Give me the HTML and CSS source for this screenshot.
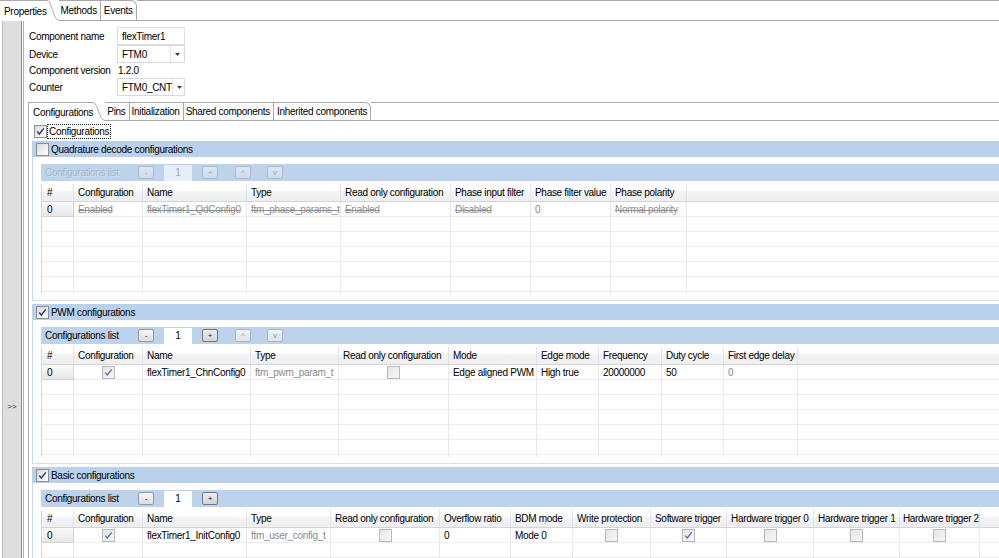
FILE: index.html
```html
<!DOCTYPE html>
<html>
<head>
<meta charset="utf-8">
<title>Properties</title>
<link rel="stylesheet" href="styles.css">
</head>
<body>
<div class="topbar">
  <div class="tab-active">
    <span class="lbl">Properties</span>
    <svg class="curve" viewBox="0 0 12 21"><path d="M0 0.5 C5 0.5 6 20.5 12 20.5" fill="none" stroke="#a9a9a9"/></svg>
  </div>
  <div class="tab">Methods</div>
  <div class="tab last">Events</div>
  <div class="tabfill"></div>
</div>
<div class="main">
  <div class="sidebar"><span>&gt;&gt;</span></div>
  <div class="content">
    <div class="fields">
      <div class="flabel">Component name</div>
      <div class="input">flexTimer1</div>
      <div class="flabel">Device</div>
      <div class="select"><span class="val">FTM0</span><span class="dd"><svg width="5" height="3" viewBox="0 0 5 3"><path d="M0 0H5L2.5 3Z" fill="#3a3a3a"/></svg></span></div>
      <div class="flabel">Component version</div>
      <div class="plain">1.2.0</div>
      <div class="flabel">Counter</div>
      <div class="select"><span class="val">FTM0_CNT</span><span class="dd"><svg width="5" height="3" viewBox="0 0 5 3"><path d="M0 0H5L2.5 3Z" fill="#3a3a3a"/></svg></span></div>
    </div>

    <div class="subtabs">
      <div class="tab-active sub">
        <span class="lbl">Configurations</span>
        <svg class="curve" viewBox="0 0 12 19"><path d="M0 0.5 C5 0.5 6 18.5 12 18.5" fill="none" stroke="#a9a9a9"/></svg>
      </div>
      <div class="tab sub">Pins</div>
      <div class="tab sub">Initialization</div>
      <div class="tab sub">Shared components</div>
      <div class="tab sub last">Inherited components</div>
      <div class="tabfill"></div>
    </div>

    <div class="folder">
      <div class="rootrow">
        <span class="cb"><svg viewBox="0 0 11 11"><path d="M2.2 5.6 L4.3 8 L8.8 2.4" fill="none" stroke="#2a3d7c" stroke-width="1.5"/></svg></span>
        <span class="focus">Configurations</span>
      </div>

      <!-- Quadrature -->
      <div class="sec-head"><span class="cb"></span><span class="stitle">Quadrature decode configurations</span></div>
      <div class="sec-body">
        <div class="listbar off">
          <span class="ll">Configurations list</span>
          <span class="btn off">-</span>
          <span class="num off">1</span>
          <span class="btn off">+</span>
          <span class="btn off up">^</span>
          <span class="btn off down">v</span>
        </div>
        <div class="tbl qd">
          <div class="tr th-row">
            <div>#</div><div>Configuration</div><div>Name</div><div>Type</div><div>Read only configuration</div><div>Phase input filter</div><div>Phase filter value</div><div>Phase polarity</div><div></div>
          </div>
          <div class="tr">
            <div class="rh">0</div><div class="dis">Enabled</div><div class="dis">flexTimer1_QdConfig0</div><div class="dis">ftm_phase_params_t</div><div class="dis">Enabled</div><div class="dis">Disabled</div><div class="gray">0</div><div class="dis">Normal polarity</div><div></div>
          </div>
          <div class="tr"><div></div><div></div><div></div><div></div><div></div><div></div><div></div><div></div><div></div></div>
          <div class="tr"><div></div><div></div><div></div><div></div><div></div><div></div><div></div><div></div><div></div></div>
          <div class="tr"><div></div><div></div><div></div><div></div><div></div><div></div><div></div><div></div><div></div></div>
          <div class="tr"><div></div><div></div><div></div><div></div><div></div><div></div><div></div><div></div><div></div></div>
          <div class="tr"><div></div><div></div><div></div><div></div><div></div><div></div><div></div><div></div><div></div></div>
          <div class="tr"><div></div><div></div><div></div><div></div><div></div><div></div><div></div><div></div><div></div></div>
        </div>
      </div>

      <!-- PWM -->
      <div class="sec-head"><span class="cb"><svg viewBox="0 0 11 11"><path d="M2.2 5.6 L4.3 8 L8.8 2.4" fill="none" stroke="#2a3d7c" stroke-width="1.5"/></svg></span><span class="stitle">PWM configurations</span></div>
      <div class="sec-body">
        <div class="listbar">
          <span class="ll">Configurations list</span>
          <span class="btn">-</span>
          <span class="num">1</span>
          <span class="btn pressed">+</span>
          <span class="btn faded up">^</span>
          <span class="btn faded down">v</span>
        </div>
        <div class="tbl pwm">
          <div class="tr th-row">
            <div>#</div><div>Configuration</div><div>Name</div><div>Type</div><div>Read only configuration</div><div>Mode</div><div>Edge mode</div><div>Frequency</div><div>Duty cycle</div><div>First edge delay</div><div></div>
          </div>
          <div class="tr">
            <div class="rh">0</div>
            <div class="c"><span class="cb dim"><svg viewBox="0 0 11 11"><path d="M2.2 5.6 L4.3 8 L8.8 2.4" fill="none" stroke="#5d6fa6" stroke-width="1.4"/></svg></span></div>
            <div>flexTimer1_ChnConfig0</div><div class="gray">ftm_pwm_param_t</div>
            <div class="c"><span class="cb dim"></span></div>
            <div>Edge aligned PWM</div><div>High true</div><div>20000000</div><div>50</div><div class="gray">0</div><div></div>
          </div>
          <div class="tr"><div></div><div></div><div></div><div></div><div></div><div></div><div></div><div></div><div></div><div></div><div></div></div>
          <div class="tr"><div></div><div></div><div></div><div></div><div></div><div></div><div></div><div></div><div></div><div></div><div></div></div>
          <div class="tr"><div></div><div></div><div></div><div></div><div></div><div></div><div></div><div></div><div></div><div></div><div></div></div>
          <div class="tr"><div></div><div></div><div></div><div></div><div></div><div></div><div></div><div></div><div></div><div></div><div></div></div>
          <div class="tr"><div></div><div></div><div></div><div></div><div></div><div></div><div></div><div></div><div></div><div></div><div></div></div>
          <div class="tr"><div></div><div></div><div></div><div></div><div></div><div></div><div></div><div></div><div></div><div></div><div></div></div>
        </div>
      </div>

      <!-- Basic -->
      <div class="sec-head"><span class="cb"><svg viewBox="0 0 11 11"><path d="M2.2 5.6 L4.3 8 L8.8 2.4" fill="none" stroke="#2a3d7c" stroke-width="1.5"/></svg></span><span class="stitle">Basic configurations</span></div>
      <div class="sec-body">
        <div class="listbar">
          <span class="ll">Configurations list</span>
          <span class="btn">-</span>
          <span class="num">1</span>
          <span class="btn pressed">+</span>
        </div>
        <div class="tbl basic">
          <div class="tr th-row">
            <div>#</div><div>Configuration</div><div>Name</div><div>Type</div><div>Read only configuration</div><div>Overflow ratio</div><div>BDM mode</div><div>Write protection</div><div>Software trigger</div><div>Hardware trigger 0</div><div>Hardware trigger 1</div><div class="tight">Hardware trigger 2</div><div></div>
          </div>
          <div class="tr">
            <div class="rh">0</div>
            <div class="c"><span class="cb dim"><svg viewBox="0 0 11 11"><path d="M2.2 5.6 L4.3 8 L8.8 2.4" fill="none" stroke="#5d6fa6" stroke-width="1.4"/></svg></span></div>
            <div>flexTimer1_InitConfig0</div><div class="gray">ftm_user_config_t</div>
            <div class="c"><span class="cb dim"></span></div>
            <div>0</div><div>Mode 0</div>
            <div class="c"><span class="cb dim"></span></div>
            <div class="c"><span class="cb dim"><svg viewBox="0 0 11 11"><path d="M2.2 5.6 L4.3 8 L8.8 2.4" fill="none" stroke="#5d6fa6" stroke-width="1.4"/></svg></span></div>
            <div class="c"><span class="cb dim"></span></div>
            <div class="c"><span class="cb dim"></span></div>
            <div class="c"><span class="cb dim"></span></div>
            <div></div>
          </div>
          <div class="tr"><div></div><div></div><div></div><div></div><div></div><div></div><div></div><div></div><div></div><div></div><div></div><div></div><div></div></div>
          <div class="tr"><div></div><div></div><div></div><div></div><div></div><div></div><div></div><div></div><div></div><div></div><div></div><div></div><div></div></div>
        </div>
      </div>
    </div>
  </div>
</div>
</body>
</html>
```
FILE: styles.css
```css
* { box-sizing: border-box; }
html, body { margin: 0; padding: 0; }
body {
  width: 999px;
  height: 558px;
  overflow: hidden;
  background: #ffffff;
  font-family: "Liberation Sans", Arial, sans-serif;
  font-size: 10px;
  letter-spacing: -0.3px;
  color: #000;
}

/* ---------- tab bars ---------- */
.topbar { display: flex; height: 21px; }
.tab-active { display: flex; height: 21px; flex: none; }
.tab-active .lbl {
  display: flex; align-items: center;
  border-top: 1px solid #a9a9a9;
  padding-left: 4px;
  white-space: nowrap;
}
.curve { display: block; width: 12px; height: 21px; flex: none; }
.tab {
  display: flex; align-items: center;
  height: 21px; flex: none;
  border-top: 1px solid #a9a9a9;
  border-bottom: 1px solid #a9a9a9;
  border-right: 1px solid #a9a9a9;
  padding: 0 3px 0 2px;
  white-space: nowrap;
}
.tab.last { border-top-right-radius: 6px; padding-left: 3px; }
.tabfill {
  flex: 1;
  border-top: 1px solid #a9a9a9;
  border-bottom: 1px solid #a9a9a9;
}

/* ---------- main ---------- */
.main { display: flex; height: 537px; }
.sidebar {
  margin-left: 2px;
  width: 20px; flex: none;
  background: #dedede;
  border-left: 1px solid #bdbdbd;
  border-right: 1px solid #8d8d8d;
  display: flex; justify-content: center; align-items: flex-start;
  padding-top: 381px;
}
.sidebar span { font-size: 8px; letter-spacing: 0; color: #333; }
.content {
  flex: 1; min-width: 0;
  margin-left: 1px;
  border-left: 1px solid #b3b3b3;
  padding: 6px 0 0 5px;
  overflow: hidden;
}

/* ---------- fields ---------- */
.fields {
  display: grid;
  grid-template-columns: 88px 68px;
  grid-template-rows: 18px 18px 15px 18px;
  align-items: center;
}
.flabel { white-space: nowrap; }
.input {
  height: 18px;
  border: 1px solid #dde1e6;
  padding-left: 4px;
  display: flex; align-items: center;
}
.select {
  height: 18px;
  border: 1px solid #d6d9dd;
  display: flex;
}
.select .val { flex: 1; display: flex; align-items: center; padding-left: 4px; white-space: nowrap; }
.select .dd {
  width: 14px; flex: none;
  border-left: 1px solid #e2e2e2;
  display: flex; align-items: center; justify-content: center;
}
.plain { padding-left: 1px; }

/* ---------- sub tabs ---------- */
.subtabs { display: flex; height: 19px; margin-top: 6px; margin-left: -1px; }
.subtabs .tab-active, .subtabs .tab { height: 19px; }
.subtabs .tab-active .lbl { border-left: 1px solid #a9a9a9; padding-left: 4px; }
.subtabs .curve { height: 19px; }

.folder {
  margin-left: -1px;
  border-left: 1px solid #a9a9a9;
  padding: 3px 0 0 3px;
}
.rootrow {
  height: 15px;
  margin: 0 0 2px 2px;
  display: flex; align-items: center;
}
.focus { outline: 1px dotted #222; margin-left: 1px; padding: 0 1px; line-height: 13px; }

/* ---------- checkbox ---------- */
.cb {
  width: 13px; height: 13px; flex: none;
  border: 1px solid #8e8f8f;
  background: linear-gradient(135deg, #d8d8d8 0%, #f2f2f2 60%, #ffffff 100%);
  display: inline-flex;
}
.cb svg { width: 11px; height: 11px; display: block; }
.cb.dim {
  border-color: #b9b9b9;
  background: linear-gradient(135deg, #e6e6e6 0%, #f7f7f7 100%);
}

/* ---------- sections ---------- */
.sec-head {
  height: 16px;
  background: #b9d1ea;
  display: flex; align-items: center;
  padding-left: 4px;
}
.stitle { margin-left: 2px; white-space: nowrap; }
.sec-body {
  border-left: 1px solid #c8d9ed;
  border-bottom: 1px solid #d5e1ef;
  padding: 7px 0 6px 8px;
  margin-bottom: 3px;
}
.listbar {
  height: 17px;
  background: #bcd3eb;
  display: flex; align-items: center;
}
.listbar .ll { width: 97px; flex: none; padding-left: 4px; white-space: nowrap; }
.btn {
  width: 16px; height: 13px; flex: none;
  border: 1px solid #8f9aa7;
  border-radius: 2px;
  background: linear-gradient(#f7f7f7, #dddddd);
  font-size: 8px; letter-spacing: 0;
  display: flex; align-items: center; justify-content: center;
  color: #222;
}
.btn.pressed { border-color: #6f7780; background: linear-gradient(#ececec, #d4d4d4); }
.btn.faded { border-color: #a9b6c4; background: linear-gradient(#eef1f4, #dfe4ea); color: #8795a6; }
.btn.up { margin-left: 17px; }
.btn.down { margin-left: 16px; }
.num {
  width: 28px; height: 16px; flex: none;
  margin: 0 10px;
  background: #ffffff;
  display: flex; align-items: center; justify-content: center;
}
.listbar.off .ll { color: #a5b8cc; text-shadow: 1px 1px 0 #d6e3f1; }
.btn.off { border-color: #a8b9cb; background: linear-gradient(#dbe6f1, #cddbea); color: #97a9bc; }
.num.off { background: #e6eef7; color: #98a8ba; }

/* ---------- tables ---------- */
.tbl {
  margin-top: 3px;
  height: 110px;
  overflow: hidden;
  border-left: 1px solid #d3d8de;
}
.tr { display: grid; height: 15px; }
.tr > div {
  border-right: 1px solid #e8e8e8;
  border-bottom: 1px solid #ededed;
  padding-left: 4px;
  display: flex; align-items: center;
  white-space: nowrap; overflow: visible;
  min-width: 0;
}
.tr > div:first-child { padding-left: 5px; }
.tr > div:last-child { border-right: none; }
.tr > div.tight { padding-left: 3px; letter-spacing: -0.4px; }
.th-row {
  height: 18px;
  background: linear-gradient(#ffffff 0%, #ffffff 38%, #f3f4f6 42%, #eceef1 100%);
  border-bottom: 1px solid #d5d5d5;
}
.th-row > div { border-bottom: none; border-right-color: #e1e3e6; }
.tr > div.rh {
  background: linear-gradient(#f9f9f9, #e7e7e7);
  border-right-color: #d4d4d4;
  border-bottom-color: #d4d4d4;
}
.tr > div.c { justify-content: center; padding-left: 0; }
.dis { color: #8f8f8f; text-decoration: line-through; }
.gray { color: #8a8a8a; }

.qd .tr { grid-template-columns: 32px 69px 104px 94px 110px 80px 80px 76px 1fr; }
.pwm .tr { grid-template-columns: 32px 69px 108px 88px 110px 88px 62px 63px 62px 74px 1fr; }
.basic .tr { grid-template-columns: 32px 69px 104px 84px 109px 71px 62px 78px 76px 87px 86px 80px 1fr; }
```
